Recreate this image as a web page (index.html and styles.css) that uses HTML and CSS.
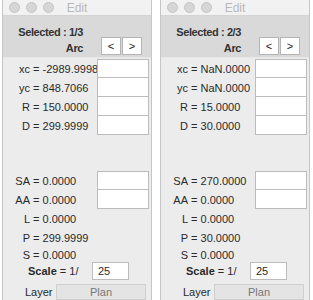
FILE: index.html
```html
<!DOCTYPE html>
<html lang="en">
<head>
    <meta charset="UTF-8">
    <title>Edit</title>
    <link rel="stylesheet" href="styles.css">
</head>
<body>
<div class="desk">

    <!-- Edit window 1 -->
    <div class="win">
        <div class="titlebar">
            <span class="light"></span><span class="light"></span><span class="light"></span>
            <span class="title">Edit</span>
        </div>
        <div class="head">
            <div class="head-text">
                <div>Selected : 1/3</div>
                <div>Arc</div>
            </div>
            <div class="nav">
                <button class="nav-btn">&lt;</button>
                <button class="nav-btn">&gt;</button>
            </div>
        </div>
        <div class="group">
            <div class="row"><span class="txt"><span class="lbl">xc</span> = -2989.9998</span><span class="box"></span></div>
            <div class="row"><span class="txt"><span class="lbl">yc</span> = 848.7066</span><span class="box"></span></div>
            <div class="row"><span class="txt"><span class="lbl">R</span> = 150.0000</span><span class="box"></span></div>
            <div class="row"><span class="txt"><span class="lbl">D</span> = 299.9999</span><span class="box"></span></div>
        </div>
        <div class="group lower">
            <div class="row"><span class="txt"><span class="lbl">SA</span> = 0.0000</span><span class="box"></span></div>
            <div class="row"><span class="txt"><span class="lbl">AA</span> = 0.0000</span><span class="box"></span></div>
            <div class="row"><span class="txt"><span class="lbl">L</span> = 0.0000</span></div>
            <div class="row"><span class="txt"><span class="lbl">P</span> = 299.9999</span></div>
            <div class="row short"><span class="txt"><span class="lbl">S</span> = 0.0000</span></div>
        </div>
        <div class="scale">
            <span class="scale-lbl"><b>Scale</b> = 1/</span>
            <span class="scale-box">25</span>
        </div>
        <div class="layer">
            <span>Layer</span>
            <span class="layer-btn">Plan</span>
        </div>
    </div>

    <!-- Edit window 2 -->
    <div class="win">
        <div class="titlebar">
            <span class="light"></span><span class="light"></span><span class="light"></span>
            <span class="title">Edit</span>
        </div>
        <div class="head">
            <div class="head-text">
                <div>Selected : 2/3</div>
                <div>Arc</div>
            </div>
            <div class="nav">
                <button class="nav-btn">&lt;</button>
                <button class="nav-btn">&gt;</button>
            </div>
        </div>
        <div class="group">
            <div class="row"><span class="txt"><span class="lbl">xc</span> = NaN.0000</span><span class="box"></span></div>
            <div class="row"><span class="txt"><span class="lbl">yc</span> = NaN.0000</span><span class="box"></span></div>
            <div class="row"><span class="txt"><span class="lbl">R</span> = 15.0000</span><span class="box"></span></div>
            <div class="row"><span class="txt"><span class="lbl">D</span> = 30.0000</span><span class="box"></span></div>
        </div>
        <div class="group lower">
            <div class="row"><span class="txt"><span class="lbl">SA</span> = 270.0000</span><span class="box"></span></div>
            <div class="row"><span class="txt"><span class="lbl">AA</span> = 0.0000</span><span class="box"></span></div>
            <div class="row"><span class="txt"><span class="lbl">L</span> = 0.0000</span></div>
            <div class="row"><span class="txt"><span class="lbl">P</span> = 30.0000</span></div>
            <div class="row short"><span class="txt"><span class="lbl">S</span> = 0.0000</span></div>
        </div>
        <div class="scale">
            <span class="scale-lbl"><b>Scale</b> = 1/</span>
            <span class="scale-box">25</span>
        </div>
        <div class="layer">
            <span>Layer</span>
            <span class="layer-btn">Plan</span>
        </div>
    </div>

</div>
</body>
</html>
```

FILE: styles.css
```css
body {
    margin: 0;
    background-color: #fff;
    font-family: "Liberation Sans", Arial, sans-serif;
    font-size: 11px;
    color: #2a2a2a;
    overflow: hidden;
}
.desk {
    display: flex;
    gap: 8px;
    padding-left: 2px;
    height: 300px;
}
.win {
    width: 150px;
    height: 300px;
    box-sizing: border-box;
    border: 1px solid #c6c6c6;
    border-top: none;
    border-bottom: none;
    background-color: #ececec;
}
.titlebar {
    height: 15px;
    display: flex;
    align-items: center;
    gap: 6px;
    padding-left: 6px;
    position: relative;
    background-color: #f2f2f2;
    border-bottom: 1px solid #d4d4d4;
}
.light {
    width: 11px;
    height: 11px;
    box-sizing: border-box;
    border-radius: 50%;
    background-color: #d6d6d6;
    border: 1px solid #c4c4c4;
}
.title {
    position: absolute;
    left: 0;
    right: 0;
    top: 1px;
    text-align: center;
    font-size: 12px;
    color: #b8b8b8;
}
.head {
    height: 41px;
    display: flex;
    background-color: #d9d9d9;
    border-bottom: 1px solid #e6e6e6;
}
.head-text {
    width: 80px;
    text-align: right;
    font-weight: bold;
    letter-spacing: -0.4px;
    color: #333;
    padding-top: 8px;
    line-height: 16px;
}
.nav {
    display: flex;
    gap: 1px;
    margin-left: 18px;
    padding-top: 21px;
}
.nav-btn {
    width: 20px;
    height: 18px;
    padding: 0;
    border: 1px solid #b4b4b4;
    background-color: #fff;
    font-family: "Liberation Sans", Arial, sans-serif;
    font-size: 11px;
    color: #222;
}
.group {
    padding-top: 1px;
}
.group.lower {
    padding-top: 36px;
}
.row {
    display: flex;
    height: 19px;
    align-items: center;
}
.row.short {
    height: 15px;
}
.txt {
    flex: 1;
    white-space: nowrap;
    overflow: hidden;
}
.lbl {
    display: inline-block;
    width: 27px;
    text-align: right;
}
.box {
    width: 52px;
    height: 19px;
    box-sizing: border-box;
    background-color: #fff;
    border: 1px solid #bcbcbc;
    margin-right: 2px;
}
.row + .row .box {
    border-top: none;
}
.scale {
    display: flex;
    align-items: center;
    height: 18px;
}
.scale-lbl {
    margin-left: 25px;
    width: 64px;
}
.scale-box {
    width: 37px;
    height: 18px;
    box-sizing: border-box;
    background-color: #fff;
    border: 1px solid #bcbcbc;
    padding: 2px 0 0 5px;
}
.layer {
    display: flex;
    align-items: center;
    height: 17px;
    margin-top: 3px;
}
.layer span:first-child {
    margin-left: 22px;
    width: 31px;
}
.layer-btn {
    width: 90px;
    height: 16px;
    box-sizing: border-box;
    border: 1px solid #cfcfcf;
    background-color: #e4e4e4;
    color: #777;
    text-align: center;
    line-height: 14px;
}
```
